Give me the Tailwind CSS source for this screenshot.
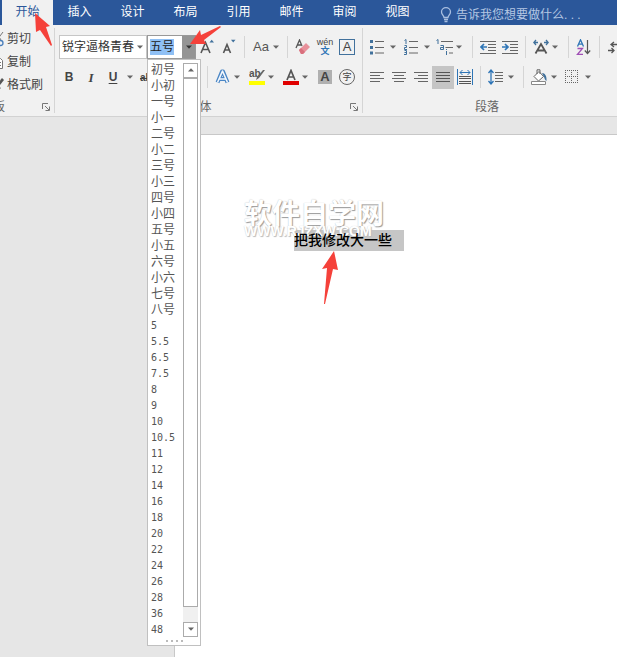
<!DOCTYPE html>
<html lang="zh-CN">
<head>
  <meta charset="utf-8">
  <title>文档 - 开始</title>
  <meta name="viewport" content="width=device-width, initial-scale=1">
  <script src="https://cdn.jsdelivr.net/npm/@tailwindcss/browser@4"></script>
</head>
<body class="bg-[#e6e6e6] text-[#444] text-xs font-['Liberation_Sans','Noto_Sans_CJK_SC',sans-serif]">

  <svg class="hidden">
    <symbol id="caret" viewBox="0 0 6 4"><path d="M0 .5h6L3 3.8z" fill="#666"/></symbol>
    <symbol id="launcher" viewBox="0 0 8 8"><path d="M.5 6V.5H6M3 3l4 4M7.5 3.500v4h-4" fill="none" stroke="#777"/></symbol>
  </svg>

  <div class="relative flex flex-col min-h-screen overflow-hidden">

    <!-- tabs -->
    <nav class="flex h-[25px] bg-[#2b579a] text-white whitespace-nowrap">
      <a href="#" class="ml-0.5 w-[51px] shrink-0 bg-[#f1f1f1] text-[#2b579a] text-center leading-6">开始</a>
      <a href="#" class="w-[53px] shrink-0 text-center leading-6">插入</a>
      <a href="#" class="w-[53px] shrink-0 text-center leading-6">设计</a>
      <a href="#" class="w-[53px] shrink-0 text-center leading-6">布局</a>
      <a href="#" class="w-[53px] shrink-0 text-center leading-6">引用</a>
      <a href="#" class="w-[53px] shrink-0 text-center leading-6">邮件</a>
      <a href="#" class="w-[53px] shrink-0 text-center leading-6">审阅</a>
      <a href="#" class="w-[53px] shrink-0 text-center leading-6">视图</a>
      <label class="flex items-center ml-4 pt-1 gap-1 text-[#b5c7e3]">
        <svg class="w-3 h-4" viewBox="0 0 12 16" fill="none" stroke="#a9bfe0" stroke-width="1.300"><path d="M4 10.500C4 8.500 1.500 7.500 1.500 5a4.500 4.300 0 0 1 9 0C10.500 7.500 8 8.500 8 10.500zM4 12.500h4M4.500 14.500h3"/></svg>
        <input type="text" value="告诉我您想要做什么. . ." class="w-36 outline-none" aria-label="告诉我您想要做什么">
      </label>
    </nav>

    <!-- ribbon -->
    <div class="flex h-[92px] bg-[#f1f1f1] border-b border-[#d2d2d2]">

      <section class="flex flex-col w-[54px] shrink-0 my-[3px] overflow-hidden whitespace-nowrap">
        <button class="flex items-center gap-[3px] h-[23px] -ml-3">
          <svg class="w-4 h-4 shrink-0" viewBox="0 0 16 16" fill="none"><path d="M8 1l5 8M15 1l-6 8" stroke="#777"/><circle cx="12.500" cy="12" r="2.500" stroke="#4a7ebb" stroke-width="1.300"/></svg>剪切
        </button>
        <button class="flex items-center gap-[3px] h-[23px] -ml-3">
          <svg class="w-4 h-4 shrink-0" viewBox="0 0 16 16" fill="#fff" stroke="#777"><path d="M3.500 1.500h7v9h-7zM8.500 4.500h4l2 2v8h-6zM10 8.500h3M10 11.500h3"/></svg>复制
        </button>
        <button class="flex items-center gap-[3px] h-[23px] -ml-3">
          <svg class="w-4 h-4 shrink-0" viewBox="0 0 16 16"><path d="M10 6l4-5 2 2-4 5z" fill="#555"/><path d="M7 6l6 5-3 3H5z" fill="#777"/></svg>格式刷
        </button>
        <div class="flex items-center justify-between h-3 -ml-[31px] pr-1 mt-[5px] text-[#666]">剪贴板
          <button aria-label="剪贴板选项"><svg class="w-2 h-2"><use href="#launcher"/></svg></button>
        </div>
      </section>

      <section class="flex flex-col w-[309px] shrink-0 my-[3px] border-x border-[#d5d5d5]">
        <div class="flex items-center h-[38px] pl-1">
          <div class="flex items-center w-[88px] h-6 shrink-0 bg-white border border-[#c6c6c6]">
            <input type="text" value="锐字逼格青春" aria-label="字体" class="w-[74px] pl-0.5 outline-none text-[#333]">
            <button aria-label="选择字体" class="flex justify-center w-3"><svg class="w-1.5 h-1"><use href="#caret"/></svg></button>
          </div>
          <div class="relative flex w-[49px] h-6 shrink-0 bg-white border border-[#999]">
            <span class="flex items-center w-[34px] pl-0.5">
              <input type="text" value="五号" aria-label="字号" class="w-6 h-4 bg-[#8fc0f5] outline-none text-[#222]">
            </span>
            <button aria-label="选择字号" class="flex flex-1 items-center justify-center bg-[#949494]"><svg class="w-1.5 h-1 brightness-50"><use href="#caret"/></svg></button>

            <!-- size list -->
            <div class="absolute z-10 top-[23px] -left-px w-[54px] bg-white border border-[#c0c0c0] text-[#555]">
              <div class="flex pt-0.5">
                <ul role="listbox" aria-label="字号" class="w-[35px] pl-[3px] text-xs leading-4 whitespace-nowrap">
                  <li role="option">初号</li>
                  <li role="option">小初</li>
                  <li role="option">一号</li>
                  <li role="option">小一</li>
                  <li role="option">二号</li>
                  <li role="option">小二</li>
                  <li role="option">三号</li>
                  <li role="option">小三</li>
                  <li role="option">四号</li>
                  <li role="option">小四</li>
                  <li role="option" aria-selected="true">五号</li>
                  <li role="option">小五</li>
                  <li role="option">六号</li>
                  <li role="option">小六</li>
                  <li role="option">七号</li>
                  <li role="option">八号</li>
                  <li role="none">
                    <ul role="group" aria-label="磅" class="font-['DejaVu_Sans_Mono',monospace] text-[10px] leading-4">
                      <li role="option">5</li>
                      <li role="option">5.5</li>
                      <li role="option">6.5</li>
                      <li role="option">7.5</li>
                      <li role="option">8</li>
                      <li role="option">9</li>
                      <li role="option">10</li>
                      <li role="option">10.5</li>
                      <li role="option">11</li>
                      <li role="option">12</li>
                      <li role="option">14</li>
                      <li role="option">16</li>
                      <li role="option">18</li>
                      <li role="option">20</li>
                      <li role="option">22</li>
                      <li role="option">24</li>
                      <li role="option">26</li>
                      <li role="option">28</li>
                      <li role="option">36</li>
                      <li role="option">48</li>
                    </ul>
                  </li>
                </ul>
                <div class="flex flex-col w-[15px] my-px bg-[#f0f0f0]">
                  <button aria-label="向上" class="flex items-center justify-center h-[15px] bg-white border border-[#ababab]"><svg class="w-1.5 h-1 rotate-180"><use href="#caret"/></svg></button>
                  <div class="flex-1 mb-[15px] bg-white border border-[#ababab]"></div>
                  <button aria-label="向下" class="flex items-center justify-center h-[15px] bg-white border border-[#ababab]"><svg class="w-1.5 h-1"><use href="#caret"/></svg></button>
                </div>
              </div>
              <div class="flex items-center justify-center gap-[3px] h-1.5 mb-[1px]">
                <i class="size-0.5 bg-[#bbb]"></i><i class="size-0.5 bg-[#bbb]"></i><i class="size-0.5 bg-[#bbb]"></i><i class="size-0.5 bg-[#bbb]"></i>
              </div>
            </div>
          </div>
          <button aria-label="增大字号" class="flex justify-center w-[22px] shrink-0">
            <svg class="w-4 h-4" viewBox="0 0 16 16"><path d="M2 14L6.500 3.500 11 14M3.500 10.500h6" fill="none" stroke="#555" stroke-width="1.600"/><path d="M10.500 3.500h4.500L12.700.8z" fill="#41719c"/></svg>
          </button>
          <button aria-label="减小字号" class="flex justify-center w-[22px] shrink-0">
            <svg class="w-4 h-4" viewBox="0 0 16 16"><path d="M2.500 14L6 5.500 9.500 14M3.700 11h4.600" fill="none" stroke="#555" stroke-width="1.600"/><path d="M10 .8h4.500L12.200 3.500z" fill="#41719c"/></svg>
          </button>
          <i class="w-px h-[22px] mx-1 bg-[#d5d5d5]"></i>
          <button class="flex items-center justify-center gap-1 w-[34px] shrink-0 text-[13px] text-[#555]">Aa<svg class="w-1.5 h-1"><use href="#caret"/></svg></button>
          <i class="w-px h-[22px] mx-1 bg-[#d5d5d5]"></i>
          <button aria-label="清除格式" class="flex justify-center w-[22px] shrink-0">
            <svg class="w-4 h-4" viewBox="0 0 16 16"><path d="M1 9l3.500-8L7 7M2 6h4" fill="none" stroke="#555" stroke-width="1.300"/><path d="M4 11l7-7 4 4-7 7H6z" fill="#e8919b"/><path d="M4 11l2-2 4 4-2 2H6z" fill="#d9707d"/></svg>
          </button>
          <button class="flex flex-col items-center w-[22px] shrink-0 text-[9px] leading-[9px]"><span>wén</span><span class="text-[#2e75b6] font-bold">文</span></button>
          <button class="flex justify-center w-[22px] shrink-0"><span class="w-4 h-4 border border-[#41719c] text-[13px] leading-[14px] text-center text-[#444]">A</span></button>
        </div>

        <div class="flex items-center h-6 pl-[3px]">
          <button class="w-[22px] shrink-0 font-bold">B</button>
          <button class="w-[22px] shrink-0 italic font-['Liberation_Serif',serif] text-[13px] font-bold">I</button>
          <button class="w-[22px] shrink-0 font-bold underline underline-offset-2">U</button>
          <button aria-label="下划线样式" class="flex justify-center w-3 shrink-0"><svg class="w-1.5 h-1"><use href="#caret"/></svg></button>
          <button class="w-[67px] pl-1 shrink-0 text-left text-[10px] font-bold line-through">abc</button>
          <i class="w-px h-[22px] mx-1 bg-[#d5d5d5]"></i>
          <button aria-label="文本效果" class="flex items-center w-[34px] shrink-0 gap-[3px] pl-[3px]">
            <svg class="w-4 h-4" viewBox="0 0 16 16" fill="none" stroke-linejoin="round"><path d="M2.500 13.500L7 2.500h1l4.500 11M4.500 10h6" stroke="#4a86c5" stroke-width="4"/><path d="M2.500 13.500L7.500 2l5 11.500M4.500 10h6" stroke="#f4f8fd" stroke-width="1.600"/></svg>
            <svg class="w-1.5 h-1"><use href="#caret"/></svg>
          </button>
          <button class="flex items-center w-[34px] shrink-0 gap-[3px] pl-[3px]">
            <svg class="w-4 h-4" viewBox="0 0 16 16"><text x="0" y="8" font-size="10" font-weight="bold" fill="#555">ab</text><path d="M16 1l-6 8-3 2 1-3 6-7z" fill="#666"/><path d="M0 12h16v4H0z" fill="#ffff00"/></svg>
            <svg class="w-1.5 h-1"><use href="#caret"/></svg>
          </button>
          <button class="flex items-center w-[34px] shrink-0 gap-[3px] pl-[3px]">
            <svg class="w-4 h-4" viewBox="0 0 16 16"><path d="M4 11L8 1.500l4 9.500M5.500 8h5" fill="none" stroke="#555" stroke-width="1.700"/><path d="M0 12h16v4H0z" fill="#e00000"/></svg>
            <svg class="w-1.5 h-1"><use href="#caret"/></svg>
          </button>
          <button class="flex justify-center w-[22px] shrink-0"><span class="w-3.5 h-3.5 bg-[#b0b0b0] text-[13px] leading-[14px] text-center font-bold">A</span></button>
          <button class="flex justify-center w-[22px] shrink-0"><span class="w-4 h-4 rounded-full border border-[#666] text-[9px] leading-[14px] text-center">字</span></button>
        </div>

        <div class="flex items-center h-3 mt-3 pr-1 text-[#666]">
          <span class="flex-1 pr-1.5 text-center">字体</span>
          <button aria-label="字体选项"><svg class="w-2 h-2"><use href="#launcher"/></svg></button>
        </div>
      </section>

      <section class="flex flex-col shrink-0 my-[3px]">
        <div class="flex items-center h-[38px] pl-[3px]">
          <button aria-label="项目符号" class="flex items-center w-[34px] shrink-0 gap-1 pl-1">
            <svg class="w-4 h-4" viewBox="0 0 16 16"><path d="M0 1h3v3H0zM0 7h3v3H0zM0 12.500h3v3H0z" fill="#41719c"/><path d="M5 2.500h9M5 8.500h9M5 14h9" stroke="#666"/></svg>
            <svg class="w-1.5 h-1"><use href="#caret"/></svg>
          </button>
          <button aria-label="编号" class="flex items-center w-[34px] shrink-0 gap-1 pl-1">
            <svg class="w-4 h-4" viewBox="0 0 16 16" fill="none"><path d="M.5 1.500L2 .5V5M.5 6.500h2v2h-2v2h2.500M.5 11.500h2v4h-2.500M.5 13.500h2" stroke="#41719c"/><path d="M5 2.500h9M5 8.500h9M5 14h9" stroke="#666"/></svg>
            <svg class="w-1.5 h-1"><use href="#caret"/></svg>
          </button>
          <button aria-label="多级列表" class="flex items-center w-[34px] shrink-0 gap-[3px] pl-0.5">
            <svg class="w-[17px] h-4" viewBox="0 0 17 16" fill="none"><path d="M.5 1.500L2 .5V5M4.500 6.500h3v4h-3v-2h3M10.500 10v1M10.500 12v4" stroke="#41719c"/><path d="M5 2.500h12M9.500 8.500H17M13 14h4" stroke="#666"/></svg>
            <svg class="w-1.5 h-1"><use href="#caret"/></svg>
          </button>
          <i class="w-px h-[22px] mx-1 bg-[#d5d5d5]"></i>
          <button aria-label="减少缩进量" class="flex justify-center w-[22px] shrink-0">
            <svg class="w-4 h-4" viewBox="0 0 16 16"><path d="M0 2.500h16M8 5.500h8M8 8.500h8M8 11.500h8M0 14.500h16" stroke="#666"/><path d="M1 8h6M4 5L1 8l3 3" fill="none" stroke="#2e75b6" stroke-width="1.700"/></svg>
          </button>
          <button aria-label="增加缩进量" class="flex justify-center w-[22px] shrink-0">
            <svg class="w-4 h-4" viewBox="0 0 16 16"><path d="M0 2.500h16M8 5.500h8M8 8.500h8M8 11.500h8M0 14.500h16" stroke="#666"/><path d="M0 8h6M3 5l3 3-3 3" fill="none" stroke="#2e75b6" stroke-width="1.700"/></svg>
          </button>
          <i class="w-px h-[22px] mx-1 bg-[#d5d5d5]"></i>
          <button aria-label="中文版式" class="flex items-center w-[34px] shrink-0 gap-[3px] pl-[3px]">
            <svg class="w-4 h-4" viewBox="0 0 16 16" fill="none"><path d="M2.500 14.500L8 5l5.500 9.500M5 11.500h6" stroke="#555" stroke-width="1.800"/><path d="M5 3.500H.8M3 1L.8 3.500 3 6M11 3.500h4.200M13 1l2.200 2.500L13 6" stroke="#41719c" stroke-width="1.300"/></svg>
            <svg class="w-1.5 h-1"><use href="#caret"/></svg>
          </button>
          <i class="w-px h-[22px] mx-1 bg-[#d5d5d5]"></i>
          <button aria-label="排序" class="flex justify-center w-[22px] shrink-0">
            <svg class="w-4 h-4" viewBox="0 0 16 16" fill="none"><path d="M1.500 7.500L4.500 .8l3 6.700M2.700 5.200h3.600" stroke="#2e75b6" stroke-width="1.300"/><path d="M1.500 9.500h5l-5 5.800h5.500" stroke="#a04fb5" stroke-width="1.300"/><path d="M11.500 1v13.500M8.800 11.500l2.700 3 2.700-3" stroke="#555" stroke-width="1.200"/></svg>
          </button>
          <i class="w-px h-[22px] mx-1 bg-[#d5d5d5]"></i>
          <button aria-label="显示编辑标记" class="flex justify-center w-[22px] shrink-0">
            <svg class="w-4 h-4" viewBox="0 0 16 16" fill="none" stroke="#555" stroke-width="1.300"><path d="M14 5.500H4M7 3L4 5.500 7 8M1 11.500h6M4.500 9L7 11.500 4.500 14"/></svg>
          </button>
        </div>

        <div class="flex items-center h-6 pl-[3px]">
          <button aria-label="左对齐" class="flex justify-center w-[22px] shrink-0"><svg class="w-3.5 h-3" viewBox="0 0 14 12" stroke="#666"><path d="M0 1.500h14M0 4.500h10M0 7.500h14M0 10.500h10"/></svg></button>
          <button aria-label="居中" class="flex justify-center w-[22px] shrink-0"><svg class="w-3.5 h-3" viewBox="0 0 14 12" stroke="#666"><path d="M0 1.500h14M2 4.500h10M0 7.500h14M2 10.500h10"/></svg></button>
          <button aria-label="右对齐" class="flex justify-center w-[22px] shrink-0"><svg class="w-3.5 h-3" viewBox="0 0 14 12" stroke="#666"><path d="M0 1.500h14M4 4.500h10M0 7.500h14M4 10.500h10"/></svg></button>
          <button aria-label="两端对齐" class="flex items-center justify-center w-[22px] h-[23px] shrink-0 bg-[#c5c5c5]"><svg class="w-3.5 h-3" viewBox="0 0 14 12" stroke="#555"><path d="M0 1.500h14M0 4.500h14M0 7.500h14M0 10.500h14"/></svg></button>
          <button aria-label="分散对齐" class="flex justify-center w-[22px] shrink-0">
            <svg class="w-4 h-4" viewBox="0 0 16 16" fill="none"><path d="M.5 0v16M15.500 0v16M3 3.500h10M5.500 1L3 3.500 5.500 6M10.500 1L13 3.500 10.500 6" stroke="#2e75b6"/><path d="M2 7.500h12M2 9.500h12M2 12.500h12M2 14.500h12" stroke="#555"/></svg>
          </button>
          <i class="w-px h-[22px] mx-1 bg-[#d5d5d5]"></i>
          <button aria-label="行距" class="flex items-center w-[34px] shrink-0 gap-1 pl-[3px]">
            <svg class="w-4 h-4" viewBox="0 0 16 16" fill="none"><path d="M3 1v14M.5 4L3 1l2.500 3M.5 12L3 15l2.500-3" stroke="#2e75b6" stroke-width="1.300"/><path d="M7 3.500h8M7 6.500h8M7 9.500h8M7 12.500h8" stroke="#666"/></svg>
            <svg class="w-1.5 h-1"><use href="#caret"/></svg>
          </button>
          <i class="w-px h-[22px] mx-1 bg-[#d5d5d5]"></i>
          <button aria-label="底纹" class="flex items-center w-[34px] shrink-0 gap-1 pl-[3px]">
            <svg class="w-4 h-4" viewBox="0 0 16 16"><path d="M3 7.500l5-5 4.500 5-5 4.500z" fill="#fff" stroke="#666"/><path d="M6 5V.8h3V5" fill="none" stroke="#666"/><path d="M11 4c3 0 5 3 4.500 8-1.500-1-2-2.500-2.500-4z" fill="#41719c"/><path d="M.5 12.500h14v3H.5z" fill="#fff" stroke="#888"/></svg>
            <svg class="w-1.5 h-1"><use href="#caret"/></svg>
          </button>
          <button aria-label="边框" class="flex items-center w-[34px] shrink-0 gap-[6px] pl-[3px]">
            <svg class="w-[14px] h-[14px]" viewBox="0 0 14 14"><path d="M0 .5h13M0 6.500h13M0 12.500h13M.5 0v13M6.500 0v13M12.500 0v13" fill="none" stroke="#666" stroke-dasharray="1 1"/></svg>
            <svg class="w-1.5 h-1"><use href="#caret"/></svg>
          </button>
        </div>

        <div class="w-[248px] h-3 mt-3 text-center leading-3 text-[#666]">段落</div>
      </section>
    </div>

    <!-- document -->
    <main class="flex flex-1 pt-[17px] pl-[174px]">
      <article class="flex-1 bg-white border-t border-l border-[#c8c8c8] pt-[95px] pl-[119px]">
        <div class="relative w-[110px] h-[21px] bg-[#c6c6c6]">
          <div class="absolute -left-[50px] -top-[31px] text-white whitespace-nowrap font-bold [text-shadow:1px_1px_1px_#999,0_0_1px_#bbb]">
            <p class="text-[28px] leading-8">软件自学网</p>
            <p class="-mt-1.5 text-sm leading-3 [text-shadow:1px_1px_1px_#bbb,0_0_1px_#ccc]">WWW.RJZXW.COM</p>
          </div>

          <p class="relative text-black text-sm leading-[21px] font-medium">把我修改大一些</p>

          <svg class="absolute left-[28px] top-[21px] w-4 h-[54px]" viewBox="0 0 16 54"><path d="M12 0L0 18l5-1-3 36h1L11 18l5 1z" fill="#f5413a"/></svg>
        </div>
      </article>
    </main>

    <!-- pointers over the ribbon -->
    <svg class="absolute z-20 left-[34px] top-[13px] w-[18px] h-[34px]" viewBox="0 0 18 34"><path d="M1 0l15 13-4 1 6 18-1 1L6 17l-4 2z" fill="#f5413a"/></svg>
    <svg class="absolute z-20 left-[190px] top-[26px] w-[31px] h-[20px]" viewBox="0 0 31 20"><path d="M0 18L10 4l1 5L30 0l1 1L14 14l2 4z" fill="#f5413a"/></svg>
  </div>
</body>
</html>
